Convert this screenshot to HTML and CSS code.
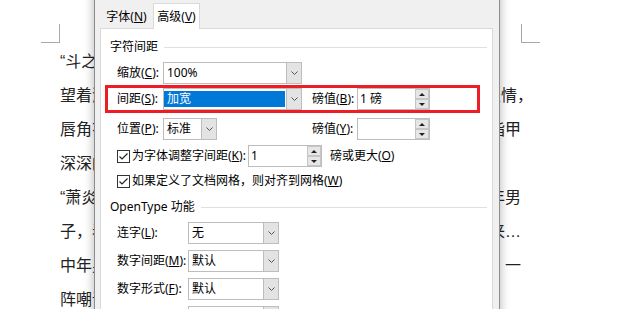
FILE: index.html
```html
<!DOCTYPE html>
<html lang="zh-CN">
<head>
    <meta charset="UTF-8">
    <title>字体 - 高级</title>
    <link rel="stylesheet" href="styles.css">
</head>
<body>
    <div class="doc">
        <span class="crop crop-left"></span>
        <span class="crop crop-right"></span>
        <div class="text">
            <p class="line"><span>“斗之力，三段！”</span></p>
            <p class="line"><span>望着测验魔石碑上闪亮得有些刺眼的五个大字，少年面无</span><span>表情<span class="hang">，</span></span></p>
            <p class="line"><span>唇角有着一抹自嘲，紧握的手掌，因为大力而导致尖锐的</span><span>指甲</span></p>
            <p class="line"><span>深深的刺进了掌心之中，带来一阵阵钻心的疼痛……</span></p>
            <p class="line"><span>“萧炎，斗之力，三段！级别：低级！”魔石碑旁，一位中</span><span>年男</span></p>
            <p class="line"><span>子，看了一眼碑上显示的信息，语气漠然的将之公布了出</span><span>来…</span></p>
            <p class="line"><span>中年男子话刚刚脱口，便是不出意外的在广场上带起了</span><span>一</span></p>
            <p class="line"><span>阵嘲讽的骚动。</span></p>
        </div>
    </div>

    <div class="dialog">
        <div class="tabs">
            <div class="tab">字体(<u>N</u>)</div>
            <div class="tab active">高级(<u>V</u>)</div>
        </div>
        <div class="panel">
            <div class="group-title">字符间距</div>
            <div class="rows">
                <div class="row">
                    <span class="lbl">缩放(<u>C</u>):</span>
                    <div class="select wide">
                        <span class="value">100%</span>
                        <span class="drop"><svg width="7" height="4" viewBox="0 0 7 4"><polyline points="0.5,0.5 3.5,3.5 6.5,0.5" fill="none" stroke="#555" stroke-width="1"/></svg></span>
                    </div>
                </div>
                <div class="row mark">
                    <span class="lbl">间距(<u>S</u>):</span>
                    <div class="select wide">
                        <span class="value sel">加宽</span>
                        <span class="drop"><svg width="7" height="4" viewBox="0 0 7 4"><polyline points="0.5,0.5 3.5,3.5 6.5,0.5" fill="none" stroke="#555" stroke-width="1"/></svg></span>
                    </div>
                    <span class="lbl2">磅值(<u>B</u>):</span>
                    <div class="spin">
                        <span class="value">1 磅</span>
                        <span class="arrows"><span><i class="up"></i></span><span><i class="down"></i></span></span>
                    </div>
                </div>
                <div class="row gap">
                    <span class="lbl">位置(<u>P</u>):</span>
                    <div class="cell">
                        <div class="select short">
                            <span class="value">标准</span>
                            <span class="drop"><svg width="7" height="4" viewBox="0 0 7 4"><polyline points="0.5,0.5 3.5,3.5 6.5,0.5" fill="none" stroke="#555" stroke-width="1"/></svg></span>
                        </div>
                    </div>
                    <span class="lbl2">磅值(<u>Y</u>):</span>
                    <div class="spin">
                        <span class="value"></span>
                        <span class="arrows"><span><i class="up"></i></span><span><i class="down"></i></span></span>
                    </div>
                </div>
                <div class="row gap">
                    <svg class="chk" width="13" height="13" viewBox="0 0 13 13"><rect x="0.5" y="0.5" width="12" height="12" fill="#fff" stroke="#333"/><polyline points="2.5,6.5 5,9 10.5,3.5" fill="none" stroke="#222" stroke-width="1.2"/></svg>
                    <span class="chk-text">为字体调整字间距(<u>K</u>):</span>
                    <div class="spin kern">
                        <span class="value">1</span>
                        <span class="arrows"><span><i class="up"></i></span><span><i class="down"></i></span></span>
                    </div>
                    <span class="after">磅或更大(<u>O</u>)</span>
                </div>
                <div class="row gap check-row">
                    <svg class="chk" width="13" height="13" viewBox="0 0 13 13"><rect x="0.5" y="0.5" width="12" height="12" fill="#fff" stroke="#333"/><polyline points="2.5,6.5 5,9 10.5,3.5" fill="none" stroke="#222" stroke-width="1.2"/></svg>
                    <span class="chk-text">如果定义了文档网格，则对齐到网格(<u>W</u>)</span>
                </div>
            </div>

            <div class="group-title second">OpenType 功能</div>
            <div class="rows features">
                <div class="row">
                    <span class="lbl-wide">连字(<u>L</u>):</span>
                    <div class="select mid">
                        <span class="value">无</span>
                        <span class="drop"><svg width="7" height="4" viewBox="0 0 7 4"><polyline points="0.5,0.5 3.5,3.5 6.5,0.5" fill="none" stroke="#555" stroke-width="1"/></svg></span>
                    </div>
                </div>
                <div class="row">
                    <span class="lbl-wide">数字间距(<u>M</u>):</span>
                    <div class="select mid">
                        <span class="value">默认</span>
                        <span class="drop"><svg width="7" height="4" viewBox="0 0 7 4"><polyline points="0.5,0.5 3.5,3.5 6.5,0.5" fill="none" stroke="#555" stroke-width="1"/></svg></span>
                    </div>
                </div>
                <div class="row">
                    <span class="lbl-wide">数字形式(<u>F</u>):</span>
                    <div class="select mid">
                        <span class="value">默认</span>
                        <span class="drop"><svg width="7" height="4" viewBox="0 0 7 4"><polyline points="0.5,0.5 3.5,3.5 6.5,0.5" fill="none" stroke="#555" stroke-width="1"/></svg></span>
                    </div>
                </div>
                <div class="row">
                    <span class="lbl-wide"></span>
                    <div class="select mid">
                        <span class="value"></span>
                        <span class="drop"></span>
                    </div>
                </div>
            </div>
        </div>
    </div>
</body>
</html>
```

FILE: styles.css
```css
* {
    box-sizing: border-box;
}
html, body {
    margin: 0;
    padding: 0;
}
body {
    width: 620px;
    height: 309px;
    overflow: hidden;
    position: relative;
    background-color: #ffffff;
    font-family: "Liberation Sans", "Noto Sans CJK SC", sans-serif;
}

/* document page behind the dialog */
.doc {
    position: relative;
    height: 309px;
}
.crop {
    position: absolute;
    top: 24px;
    width: 19px;
    height: 19px;
    border-bottom: 1px solid #a8a8a8;
}
.crop-left {
    left: 41px;
    border-right: 1px solid #a8a8a8;
}
.crop-right {
    left: 521px;
    border-left: 1px solid #a8a8a8;
}
.text {
    margin-left: 60px;
    padding-top: 45px;
    width: 461px;
}
.line {
    margin: 0;
    display: flex;
    justify-content: space-between;
    height: 34px;
    line-height: 34px;
    font-size: 16px;
    color: #222;
    white-space: nowrap;
}
.hang {
    margin-right: -12px;
}

/* font dialog */
.dialog {
    position: absolute;
    left: 94px;
    top: -30px;
    width: 406px;
    height: 380px;
    padding: 32px 6px 0 5px;
    background-color: #f0f0f0;
    border: 1px solid #8c8c8c;
    box-shadow: 0 0 10px rgba(0, 0, 0, 0.3);
    font-family: "Noto Sans", "Noto Sans CJK SC", sans-serif;
    font-size: 12px;
    color: #000;
    overflow: hidden;
}
u {
    text-underline-offset: 1px;
}
.tabs {
    display: flex;
    align-items: flex-end;
    height: 25px;
    position: relative;
    z-index: 1;
}
.tab {
    width: 53px;
    height: 23px;
    line-height: 22px;
    text-align: center;
    border: 1px solid transparent;
    border-bottom: none;
}
.tab.active {
    width: 47px;
    height: 26px;
    line-height: 25px;
    margin-bottom: -1px;
    background-color: #ffffff;
    border-color: #d9d9d9;
}
.panel {
    height: 340px;
    padding: 10px 5px 0 9px;
    background-color: #ffffff;
    border: 1px solid #d9d9d9;
}
.group-title {
    display: flex;
    align-items: center;
    height: 16px;
    line-height: 16px;
}
.group-title::after {
    content: "";
    flex: 1;
    margin-left: 6px;
    border-top: 1px solid #e0e0e0;
}
.group-title.second {
    margin-top: 9px;
}
.rows {
    margin: 7px 0 0 7px;
    display: flex;
    flex-direction: column;
}
.row {
    display: flex;
    align-items: center;
    height: 22px;
    line-height: 16px;
    white-space: nowrap;
}
.row.gap {
    margin-top: 5px;
}
.row.mark {
    height: 28px;
    width: 375px;
    margin: 1px 0 0 -12px;
    padding-left: 9px;
    border: 3px solid #ee1c25;
}
.row.check-row {
    height: 18px;
}
.features .row + .row {
    margin-top: 6px;
}
.lbl {
    width: 46px;
}
.lbl-wide {
    width: 71px;
}
.lbl2 {
    width: 45px;
    margin-left: 10px;
}
.cell {
    width: 139px;
}

.select {
    display: flex;
    height: 22px;
    background-color: #ffffff;
    border: 1px solid #bdbdbd;
}
.select.wide {
    width: 139px;
}
.select.short {
    width: 54px;
}
.select.mid {
    width: 91px;
}
.select .value {
    flex: 1;
    padding-left: 3px;
    line-height: 20px;
}
.select .value.sel {
    margin: 2px 1px 2px 0;
    line-height: 16px;
    background-color: #0078d7;
    color: #ffffff;
}
.drop {
    width: 15px;
    display: flex;
    align-items: center;
    justify-content: center;
    background-color: #e3e3e3;
    border-left: 1px solid #bdbdbd;
}

.spin {
    display: flex;
    width: 73px;
    height: 22px;
    background-color: #ffffff;
    border: 1px solid #bdbdbd;
}
.spin.kern {
    width: 74px;
    margin-left: 2px;
}
.spin .value {
    flex: 1;
    padding-left: 2px;
    line-height: 20px;
}
.arrows {
    width: 14px;
    display: flex;
    flex-direction: column;
}
.arrows span {
    flex: 1;
    display: flex;
    align-items: center;
    justify-content: center;
    background-color: #e6e6e6;
    border: 1px solid #c6c6c6;
}
.up, .down {
    width: 0;
    height: 0;
    border-left: 3px solid transparent;
    border-right: 3px solid transparent;
}
.up {
    border-bottom: 3px solid #222;
}
.down {
    border-top: 3px solid #222;
}

.chk {
    flex: none;
    margin-right: 2px;
}
.after {
    margin-left: 8px;
}
```
